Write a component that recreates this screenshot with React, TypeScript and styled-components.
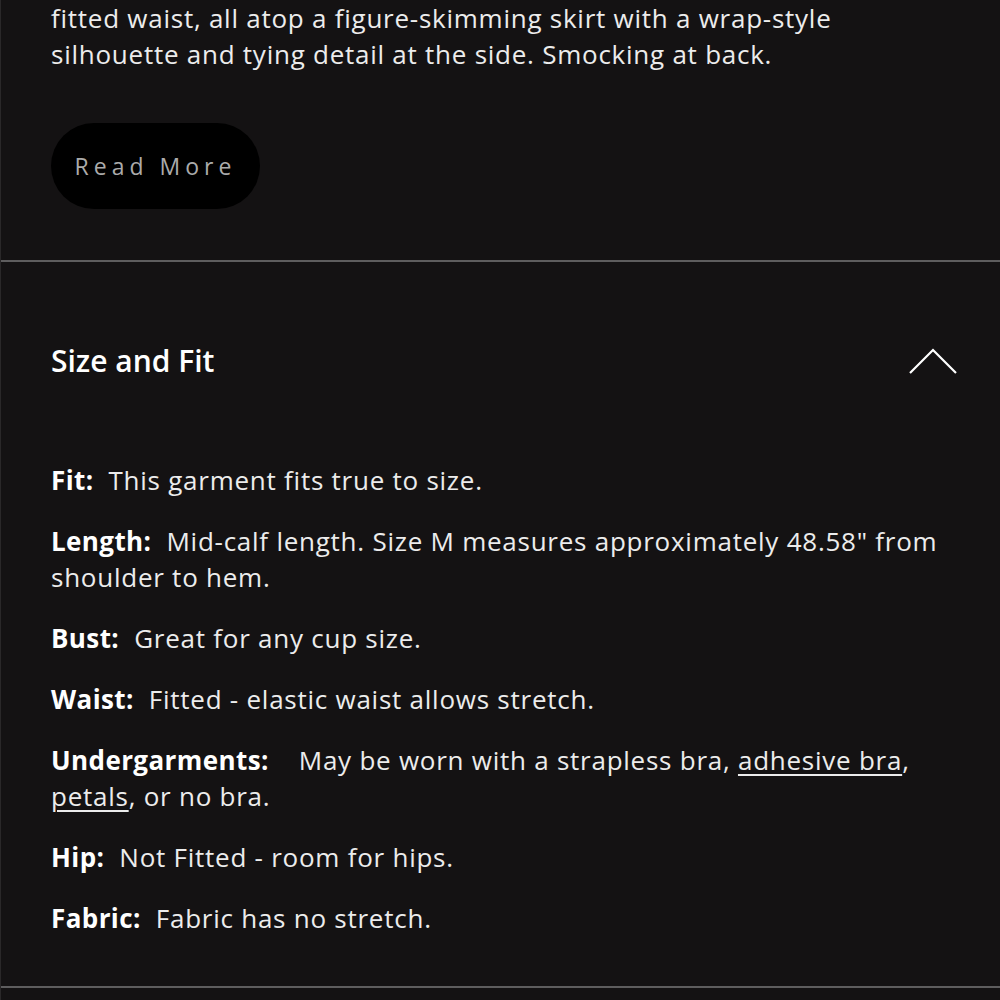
import React from "react";
import styled, { createGlobalStyle } from "styled-components";

const GlobalStyle = createGlobalStyle`
  html, body {
    margin: 0;
    padding: 0;
    background: #141213;
  }
  body {
    font-family: "Open Sans", Lato, sans-serif;
    color: #ececec;
  }
`;

const fitItems = [
  { label: "Fit:", text: "This garment fits true to size." },
  {
    label: "Length:",
    text: 'Mid-calf length. Size M measures approximately 48.58" from shoulder to hem.',
  },
  { label: "Bust:", text: "Great for any cup size." },
  { label: "Waist:", text: "Fitted - elastic waist allows stretch." },
  { label: "Undergarments:", text: null },
  { label: "Hip:", text: "Not Fitted - room for hips." },
  { label: "Fabric:", text: "Fabric has no stretch." },
];

const App = () => {
  return (
    <Page>
      <GlobalStyle />

      {/* Description */}
      <Section>
        <Description>
          fitted waist, all atop a figure-skimming skirt with a wrap-style
          silhouette and tying detail at the side. Smocking at back.
        </Description>
        <ReadMoreButton>Read More</ReadMoreButton>
      </Section>

      {/* Size and Fit */}
      <FitSection>
        <AccordionHeader>
          <HeaderTitle>Size and Fit</HeaderTitle>
          <Chevron width="50" height="34" viewBox="0 0 50 34">
            <polyline
              points="2,30 25,7 48,30"
              fill="none"
              stroke="#fff"
              strokeWidth="2.2"
            />
          </Chevron>
        </AccordionHeader>

        <FitList>
          {fitItems.map((item) => (
            <FitRow key={item.label}>
              <Label>{item.label}</Label>
              {item.text !== null ? (
                <>&nbsp; {item.text}</>
              ) : (
                <>
                  &nbsp;&nbsp;&nbsp; May be worn with a strapless bra,{" "}
                  <Link>adhesive bra</Link>, <Link>petals</Link>, or no bra.
                </>
              )}
            </FitRow>
          ))}
        </FitList>
      </FitSection>
    </Page>
  );
};

export default App;

const Page = styled.main`
  width: 1000px;
  min-height: 1000px;
  box-sizing: border-box;
  border-left: 1px solid #2a2829;
  background: #141213;
  overflow: hidden;
`;

const Section = styled.section`
  padding: 0 50px 51px;
  border-bottom: 2px solid #5e5d5e;
`;

const Description = styled.p`
  margin: 0 0 51px;
  font-size: 26px;
  line-height: 36px;
  letter-spacing: 0.75px;
  color: #ececec;
`;

const ReadMoreButton = styled.button`
  display: block;
  width: 209px;
  height: 86px;
  border: none;
  border-radius: 43px;
  background: #000;
  color: #ababab;
  font-family: "Open Sans", Lato, sans-serif;
  font-size: 23px;
  letter-spacing: 5px;
  padding: 0;
  cursor: pointer;
`;

const FitSection = styled.section`
  padding: 0 41px 50px 50px;
  border-bottom: 2px solid #5e5d5e;
`;

const AccordionHeader = styled.div`
  display: flex;
  align-items: center;
  justify-content: space-between;
  height: 84px;
  margin-top: 56px;
`;

const HeaderTitle = styled.h2`
  margin: 0;
  font-size: 30px;
  font-weight: 600;
  color: #fff;
`;

const Chevron = styled.svg`
  display: block;
  margin-right: 1px;
`;

const FitList = styled.div`
  display: flex;
  flex-direction: column;
  gap: 25px;
  margin-top: 60px;
`;

const FitRow = styled.p`
  margin: 0;
  font-size: 26px;
  line-height: 36px;
  letter-spacing: 0.75px;
  color: #ececec;
`;

const Label = styled.strong`
  font-weight: 700;
  letter-spacing: 0.4px;
  color: #fff;
`;

const Link = styled.a`
  color: #ececec;
  text-decoration: underline;
  text-underline-offset: 4px;
  text-decoration-thickness: 1.5px;
`;
